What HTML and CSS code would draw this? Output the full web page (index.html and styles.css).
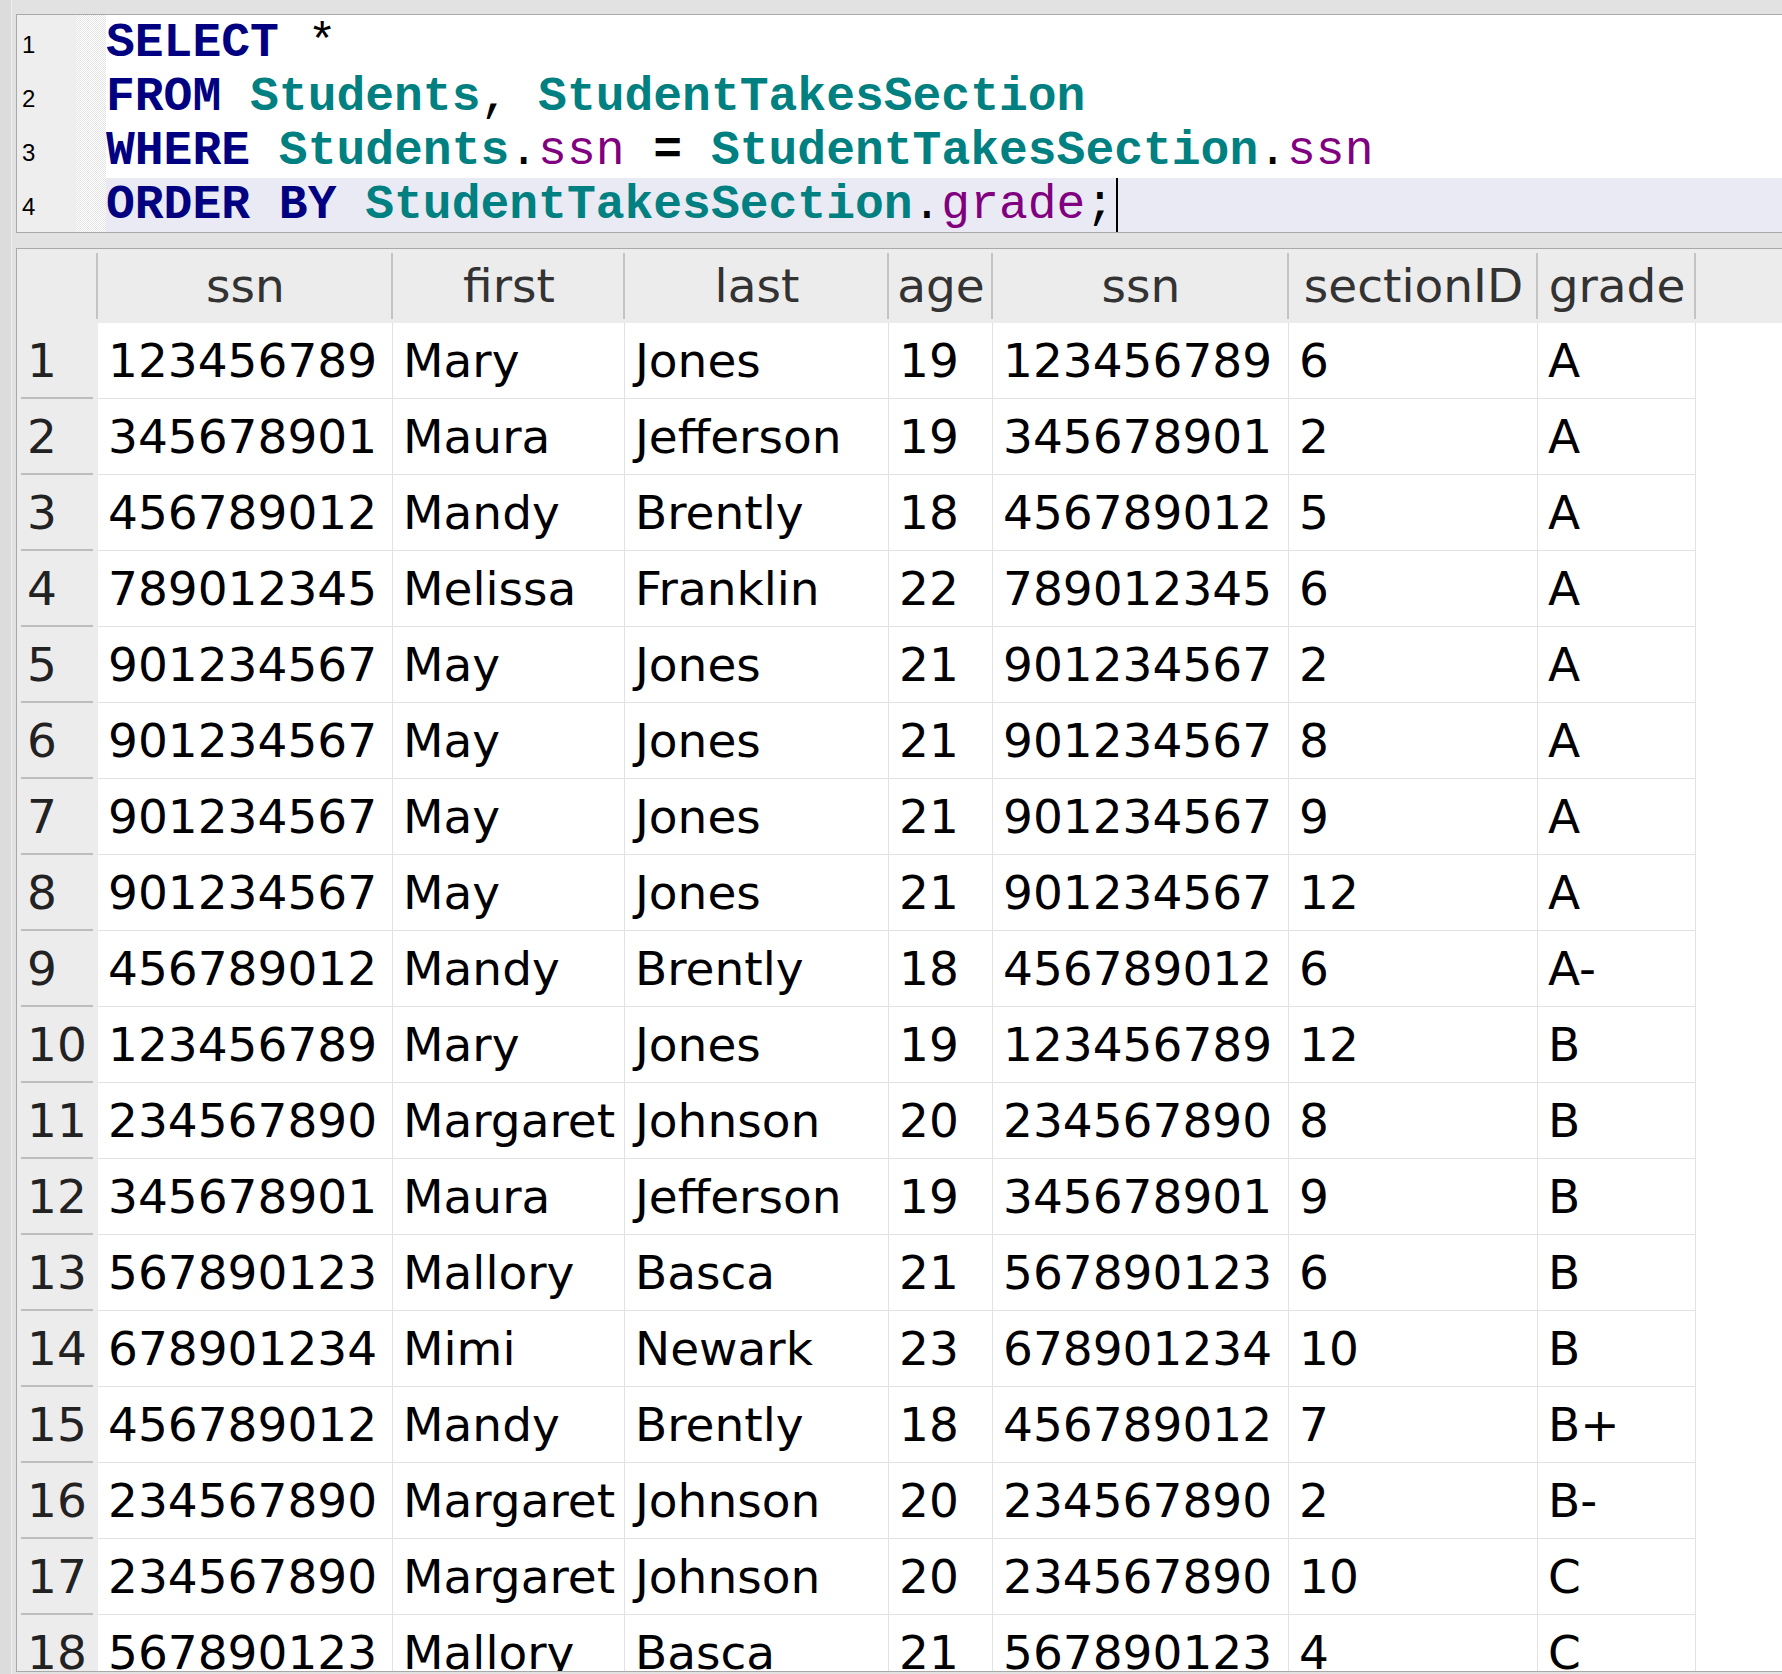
FILE: index.html
```html
<!DOCTYPE html>
<html>
<head>
<meta charset="utf-8">
<link rel="stylesheet" href="styles.css">
</head>
<body>
<div class="editor">
  <div class="gutter">
    <div class="ln">1</div>
    <div class="ln">2</div>
    <div class="ln">3</div>
    <div class="ln">4</div>
  </div>
  <div class="fold"></div>
  <div class="code">
    <div class="cl"><span class="kw">SELECT</span><span class="op"> *</span></div>
    <div class="cl"><span class="kw">FROM </span><span class="tb">Students</span><span class="op">, </span><span class="tb">StudentTakesSection</span></div>
    <div class="cl"><span class="kw">WHERE </span><span class="tb">Students</span><span class="op">.</span><span class="col">ssn</span><span class="op"> </span><span class="eq">=</span><span class="op"> </span><span class="tb">StudentTakesSection</span><span class="op">.</span><span class="col">ssn</span></div>
    <div class="cl cur"><span class="kw">ORDER BY </span><span class="tb">StudentTakesSection</span><span class="op">.</span><span class="col">grade</span><span class="op">;</span><span class="caret"></span></div>
  </div>
</div>

<div class="results">
  <div class="row hdr">
    <div class="h"></div>
    <div class="h">ssn</div>
    <div class="h">first</div>
    <div class="h">last</div>
    <div class="h">age</div>
    <div class="h">ssn</div>
    <div class="h">sectionID</div>
    <div class="h">grade</div>
    <div class="hf"></div>
  </div>
  <div class="row"><div class="n">1</div><div class="d">123456789</div><div class="d">Mary</div><div class="d">Jones</div><div class="d">19</div><div class="d">123456789</div><div class="d">6</div><div class="d">A</div><div class="f"></div></div>
  <div class="row"><div class="n">2</div><div class="d">345678901</div><div class="d">Maura</div><div class="d">Jefferson</div><div class="d">19</div><div class="d">345678901</div><div class="d">2</div><div class="d">A</div><div class="f"></div></div>
  <div class="row"><div class="n">3</div><div class="d">456789012</div><div class="d">Mandy</div><div class="d">Brently</div><div class="d">18</div><div class="d">456789012</div><div class="d">5</div><div class="d">A</div><div class="f"></div></div>
  <div class="row"><div class="n">4</div><div class="d">789012345</div><div class="d">Melissa</div><div class="d">Franklin</div><div class="d">22</div><div class="d">789012345</div><div class="d">6</div><div class="d">A</div><div class="f"></div></div>
  <div class="row"><div class="n">5</div><div class="d">901234567</div><div class="d">May</div><div class="d">Jones</div><div class="d">21</div><div class="d">901234567</div><div class="d">2</div><div class="d">A</div><div class="f"></div></div>
  <div class="row"><div class="n">6</div><div class="d">901234567</div><div class="d">May</div><div class="d">Jones</div><div class="d">21</div><div class="d">901234567</div><div class="d">8</div><div class="d">A</div><div class="f"></div></div>
  <div class="row"><div class="n">7</div><div class="d">901234567</div><div class="d">May</div><div class="d">Jones</div><div class="d">21</div><div class="d">901234567</div><div class="d">9</div><div class="d">A</div><div class="f"></div></div>
  <div class="row"><div class="n">8</div><div class="d">901234567</div><div class="d">May</div><div class="d">Jones</div><div class="d">21</div><div class="d">901234567</div><div class="d">12</div><div class="d">A</div><div class="f"></div></div>
  <div class="row"><div class="n">9</div><div class="d">456789012</div><div class="d">Mandy</div><div class="d">Brently</div><div class="d">18</div><div class="d">456789012</div><div class="d">6</div><div class="d">A-</div><div class="f"></div></div>
  <div class="row"><div class="n">10</div><div class="d">123456789</div><div class="d">Mary</div><div class="d">Jones</div><div class="d">19</div><div class="d">123456789</div><div class="d">12</div><div class="d">B</div><div class="f"></div></div>
  <div class="row"><div class="n">11</div><div class="d">234567890</div><div class="d">Margaret</div><div class="d">Johnson</div><div class="d">20</div><div class="d">234567890</div><div class="d">8</div><div class="d">B</div><div class="f"></div></div>
  <div class="row"><div class="n">12</div><div class="d">345678901</div><div class="d">Maura</div><div class="d">Jefferson</div><div class="d">19</div><div class="d">345678901</div><div class="d">9</div><div class="d">B</div><div class="f"></div></div>
  <div class="row"><div class="n">13</div><div class="d">567890123</div><div class="d">Mallory</div><div class="d">Basca</div><div class="d">21</div><div class="d">567890123</div><div class="d">6</div><div class="d">B</div><div class="f"></div></div>
  <div class="row"><div class="n">14</div><div class="d">678901234</div><div class="d">Mimi</div><div class="d">Newark</div><div class="d">23</div><div class="d">678901234</div><div class="d">10</div><div class="d">B</div><div class="f"></div></div>
  <div class="row"><div class="n">15</div><div class="d">456789012</div><div class="d">Mandy</div><div class="d">Brently</div><div class="d">18</div><div class="d">456789012</div><div class="d">7</div><div class="d">B+</div><div class="f"></div></div>
  <div class="row"><div class="n">16</div><div class="d">234567890</div><div class="d">Margaret</div><div class="d">Johnson</div><div class="d">20</div><div class="d">234567890</div><div class="d">2</div><div class="d">B-</div><div class="f"></div></div>
  <div class="row"><div class="n">17</div><div class="d">234567890</div><div class="d">Margaret</div><div class="d">Johnson</div><div class="d">20</div><div class="d">234567890</div><div class="d">10</div><div class="d">C</div><div class="f"></div></div>
  <div class="row"><div class="n">18</div><div class="d">567890123</div><div class="d">Mallory</div><div class="d">Basca</div><div class="d">21</div><div class="d">567890123</div><div class="d">4</div><div class="d">C</div><div class="f"></div></div>
</div>
</body>
</html>
```

FILE: styles.css
```css
html, body {
  margin: 0;
  padding: 0;
}
body {
  width: 1782px;
  height: 1674px;
  overflow: hidden;
  background: linear-gradient(to right, #dcdcdc 0, #dcdcdc 11px, #efefef 11px, #efefef 12px, #e2e2e2 12px) #dedede;
}

/* ---------- SQL editor ---------- */
.editor {
  display: flex;
  margin: 14px 0 0 16px;
  border-top: 1px solid #a9a9a9;
  border-bottom: 1px solid #a9a9a9;
  border-left: 1px solid #a9a9a9;
  background: #fff;
}
.gutter {
  width: 59px;
  padding-top: 1px;
  background: #eeeeee;
}
.ln {
  height: 54px;
  line-height: 57px;
  padding-left: 5px;
  font-family: "Liberation Sans", Arial, sans-serif;
  font-size: 24px;
  color: #000;
}
.fold {
  width: 30px;
  background: repeating-conic-gradient(#e4e4e4 0 25%, #ffffff 0 50%) 0 0 / 2px 2px;
}
.code {
  flex: 1;
  padding-top: 1px;
}
.cl {
  height: 54px;
  line-height: 54px;
  white-space: pre;
  font-family: "Liberation Mono", "Courier New", monospace;
  font-size: 48px;
  color: #000;
}
.cl.cur {
  background: #eaeaf4;
}
.kw {
  color: #000080;
  font-weight: bold;
}
.tb {
  color: #008080;
  font-weight: bold;
}
.col {
  color: #800080;
}
.eq {
  font-weight: bold;
}
.caret {
  display: inline-block;
  width: 0;
  height: 54px;
  margin-left: 2px;
  border-left: 2px solid #000;
  vertical-align: top;
}

/* ---------- result grid ---------- */
.results {
  margin: 15px 0 0 16px;
  height: 1422px;
  overflow: hidden;
  border-top: 1px solid #a9a9a9;
  border-bottom: 1px solid #a9a9a9;
  border-left: 1px solid #a9a9a9;
  background: #fff;
  font-family: "DejaVu Sans", "Lucida Grande", sans-serif;
  font-size: 47px;
}
.row {
  display: grid;
  grid-template-columns: 81px 295px 232px 264px 104px 296px 249px 158px 1fr;
  height: 76px;
}
.row > div {
  box-sizing: border-box;
  white-space: nowrap;
  overflow: hidden;
}
.hdr {
  height: 74px;
  background: #ececec;
}
.h {
  line-height: 74px;
  text-align: center;
  color: #333;
  background: linear-gradient(#c4c4c4, #c4c4c4) right 0 top 4px / 2px 66px no-repeat;
}
.hf {
  background: #ececec;
}
.n {
  line-height: 76px;
  padding-left: 10px;
  color: #222;
  background: linear-gradient(#bdbdbd, #bdbdbd) left 4px bottom 0 / 72px 2px no-repeat #ececec;
}
.d {
  line-height: 75px;
  padding-left: 10px;
  color: #000;
  border-right: 1px solid #e2e2e2;
  border-bottom: 1px solid #e2e2e2;
}
.f {
  background: #fff;
}
```
